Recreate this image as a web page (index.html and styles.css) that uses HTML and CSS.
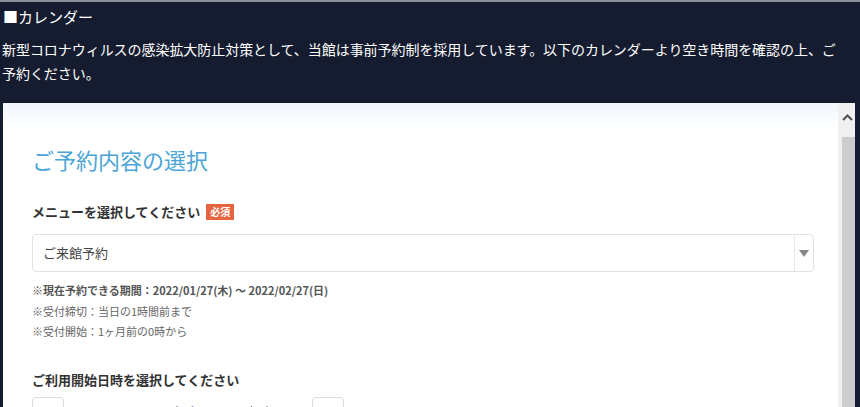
FILE: index.html
```html
<!DOCTYPE html>
<html lang="ja">
<head>
	<meta charset="UTF-8">
	<title>カレンダー</title>
	<link rel="stylesheet" href="styles.css">
</head>
<body>
	<div class="page">
		<h2 class="title">■カレンダー</h2>
		<p class="lead">新型コロナウィルスの感染拡大防止対策として、当館は事前予約制を採用しています。以下のカレンダーより空き時間を確認の上、ご予約ください。</p>
		<div class="frame">
			<div class="content">
				<h1 class="heading">ご予約内容の選択</h1>
				<div class="label">メニューを選択してください <span class="req">必須</span></div>
				<div class="select">
					<span class="select-text">ご来館予約</span>
					<span class="select-arrow"></span>
				</div>
				<ul class="notes">
					<li class="strong">※現在予約できる期間：2022/01/27(木) ～ 2022/02/27(日)</li>
					<li>※受付締切：当日の1時間前まで</li>
					<li>※受付開始：1ヶ月前の0時から</li>
				</ul>
				<div class="label label2">ご利用開始日時を選択してください</div>
				<div class="week">
					<span class="btn">‹</span>
					<span class="range">2022/02/28(月) ～ 03/06(日)</span>
					<span class="btn">›</span>
				</div>
			</div>
			<div class="scrollbar">
				<div class="sb-up">
					<svg width="11" height="7" viewBox="0 0 11 7"><path d="M1 6 L5.5 1.5 L10 6" fill="none" stroke="#505050" stroke-width="2"/></svg>
				</div>
				<div class="sb-thumb"></div>
			</div>
		</div>
	</div>
</body>
</html>
```

FILE: styles.css
```css
html,body{
	margin: 0;padding: 0;background: #151c2f;
}
.page{
	height: 407px;overflow: hidden;border-top: 2px solid #8a8f9a;box-sizing: border-box;padding: 0 3px;
	font-family: "Noto Sans CJK JP", "Noto Sans", sans-serif;color: #fff;
}
.title{
	margin: 0;padding-top: 4px;font-size: 15px;font-weight: normal;line-height: 22px;
}
.lead{
	margin: 9px 10px 0 -1px;font-size: 14px;line-height: 24px;letter-spacing: -0.05px;
}
.frame{
	display: flex;margin-top: 18px;height: 320px;background: #fff;
	border-right: 2px solid #151c2f;
}
.content{
	flex: 1;padding: 0 24px 0 29px;color: #333;
	background: linear-gradient(#f1f6fc, #fff 28px);
}
.heading{
	margin: 40px 0 0;font-size: 22px;font-weight: normal;color: #4aa5d6;line-height: 32px;
}
.label{
	margin-top: 27px;font-size: 13px;font-weight: bold;color: #333;line-height: 20px;
}
.req{
	display: inline-block;background: #e8643f;color: #fff;font-size: 10px;line-height: 16px;padding: 0 4px;
	border-radius: 1px;vertical-align: 1px;margin-left: 3px;
}
.select{
	display: flex;margin-top: 12px;height: 38px;border: 1px solid #e2e2e2;border-radius: 4px;box-sizing: border-box;
}
.select-text{
	flex: 1;font-size: 13px;line-height: 36px;padding-left: 10px;color: #444;
}
.select-arrow{
	width: 18px;border-left: 1px solid #e8e8e8;position: relative;
}
.select-arrow:after{
	content: "";position: absolute;left: 4px;top: 15px;border-left: 5px solid transparent;border-right: 5px solid transparent;border-top: 7px solid #888;
}
.notes{
	list-style: none;margin: 8px 0 0;padding: 0;font-size: 11px;line-height: 20.5px;color: #666;
}
.notes .strong{
	font-weight: bold;color: #555;
}
.label2{
	margin-top: 28px;
}
.week{
	display: flex;align-items: flex-start;margin-top: 7px;
}
.btn{
	width: 30px;height: 30px;border: 1px solid #ddd;border-radius: 4px;text-align: center;font-size: 14px;color: #999;line-height: 28px;
}
.range{
	width: 248px;text-align: center;font-size: 13px;color: #444;line-height: 30px;
}
.scrollbar{
	width: 17px;background: #f0f0f0;display: flex;flex-direction: column;
}
.sb-up{
	height: 28px;display: flex;align-items: center;justify-content: center;padding-left: 2px;
}
.sb-thumb{
	flex: 1;margin: 6px 0 0 4px;background: #cdcdcd;
}
```
